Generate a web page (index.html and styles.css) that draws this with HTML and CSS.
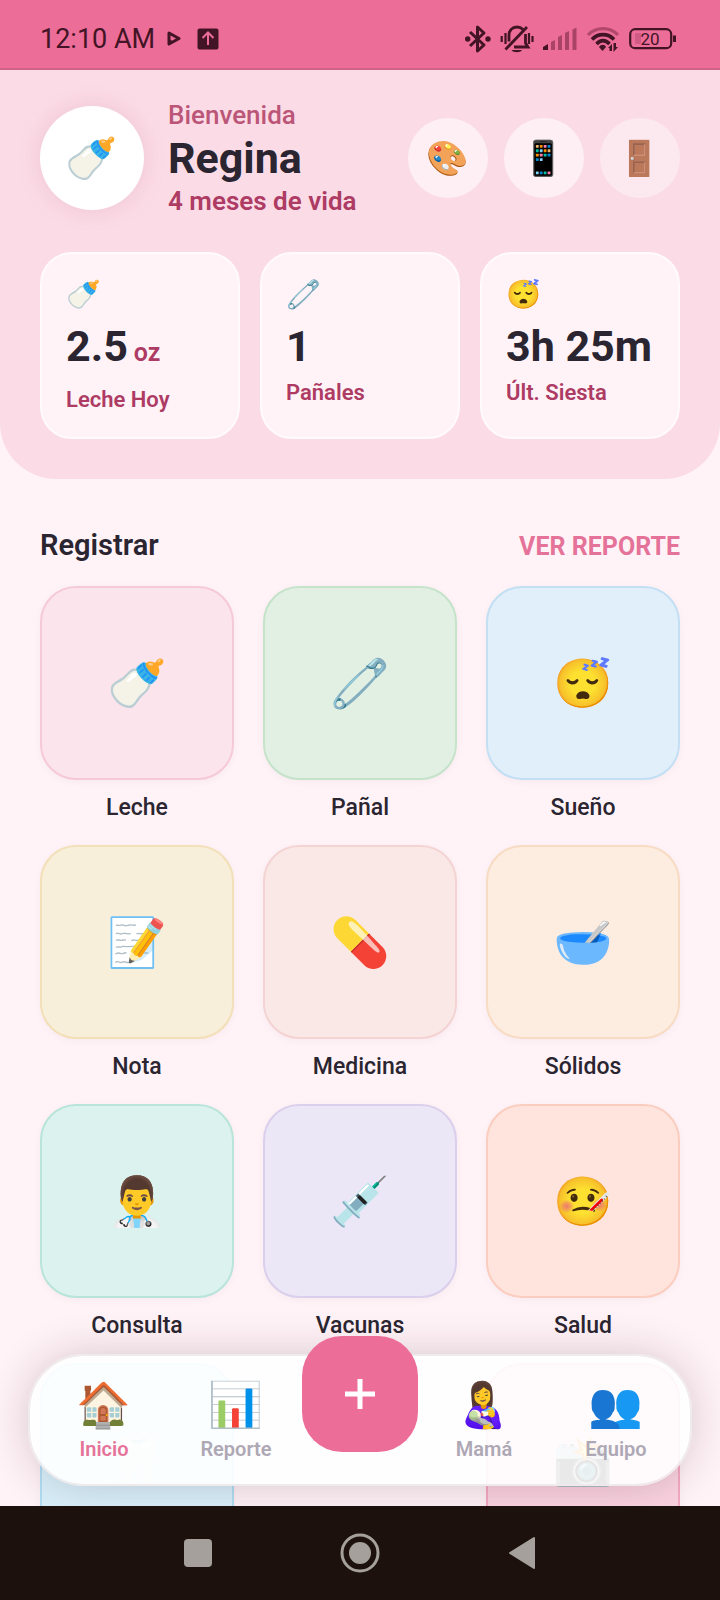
FILE: index.html
```html
<!DOCTYPE html>
<html lang="es">
<head>
<meta charset="utf-8">
<meta name="viewport" content="width=device-width, initial-scale=1">
<title>Inicio</title>
<link rel="stylesheet" href="styles.css">
</head>
<body>
<div class="app">
  <div class="status">
    <div class="status-left">
      <time>12:10 AM</time>
      <svg width="14" height="16" viewBox="0 0 14 16"><path d="M2 2 12 7.500 2 13Z" fill="none" stroke="#421425" stroke-width="3" stroke-linejoin="round"/><path d="M2 14V8l4 2.500Z" fill="#421425"/></svg>
      <svg class="upload" width="22" height="22" viewBox="0 0 22 22"><rect width="21" height="21" x=".5" y=".5" rx="2" fill="#421425"/><path d="M11 17V5M5.500 10 11 4.500l5.500 5.500" fill="none" stroke="#ec6d97" stroke-width="2"/></svg>
    </div>
    <div class="status-right">
      <svg width="26" height="30" viewBox="0 0 26 30"><path d="m5 8 14 13-6.500 6V3L19 9 5 22" fill="none" stroke="#421425" stroke-width="3" stroke-linejoin="round"/><circle cx="2.700" cy="15" r="2.700" fill="#421425"/><circle cx="23" cy="15" r="2.700" fill="#421425"/></svg>
      <svg width="34" height="30" viewBox="0 0 34 30"><g fill="none" stroke="#421425" stroke-width="2.800"><path d="M9 17.500v-6C9 6.500 12 3 17 3c2.500 0 4.500 1 6 2.500M25.500 10v9l2.500 4H14M5.500 25.500 27 3"/><path d="M1.700 12v6M5.500 9v11M29 9v11M32.500 12v6" stroke-width="2.200"/></g><path d="M11.500 26h10.500c-1.500 3-9 3-10.500 0Z" fill="#421425"/></svg>
      <svg width="34" height="24" viewBox="0 0 34 24"><path d="M0 23v-3l5-3v6Z" fill="#421425"/><path d="M8 23v-8l4-2v10ZM15 23V10l4-2v15ZM22 23V6l4-2v19ZM29.500 23V2.500l4-2V23Z" fill="#a94467"/></svg>
      <svg width="34" height="28" viewBox="0 0 34 28"><g fill="none" stroke-width="3.200"><path d="M2 10C10 1.500 24 1.500 32 10" stroke="#b3476c"/><path d="M6 14.500c6-6.500 16-6.500 22 0M10.500 19c4-4.500 9-4.500 13 0" stroke="#421425" stroke-width="3.600"/></g><path d="M13 22c2-3 6-3 7 0l-3.500 4ZM22 23l4-4v7h-2.500v-3M27.500 18H30v4h2l-4.500 5Z" fill="#421425"/></svg>
      <svg class="battery" width="48" height="24" viewBox="0 0 48 24"><rect x="6" y="6" width="6" height="11" rx="1" fill="#d05b84"/><rect x="1.200" y="2.200" width="41" height="19" rx="5" fill="none" stroke="#421425" stroke-width="2.200"/><path d="M44 8.500h3v6.500h-3Z" fill="#421425"/><text x="21" y="18" text-anchor="middle" class="battery-text">20</text></svg>
    </div>
  </div>

  <main class="content">
    <header class="hero">
      <div class="profile">
        <div class="avatar">🍼</div>
        <div class="who">
          <p class="hello">Bienvenida</p>
          <h1 class="name">Regina</h1>
          <p class="age">4 meses de vida</p>
        </div>
        <div class="tools">
          <button class="tool" aria-label="Tema">🎨</button>
          <button class="tool" aria-label="Dispositivo">📱</button>
          <button class="tool tool-faint" aria-label="Salir"><span>🚪</span></button>
        </div>
      </div>
      <div class="stats">
        <section class="stat"><span class="stat-icon">🍼</span><p class="stat-value"><span>2.5</span><small>oz</small></p><p class="stat-label stat-label-low">Leche Hoy</p></section>
        <section class="stat"><span class="stat-icon">🧷</span><p class="stat-value">1</p><p class="stat-label">Pañales</p></section>
        <section class="stat"><span class="stat-icon">😴</span><p class="stat-value">3h 25m</p><p class="stat-label">Últ. Siesta</p></section>
      </div>
    </header>

    <section class="log">
      <div class="log-head"><h2>Registrar</h2><a href="#reporte">VER REPORTE</a></div>
      <div class="grid">
        <button class="item"><span class="tile leche">🍼</span><span class="item-label">Leche</span></button>
        <button class="item"><span class="tile panal">🧷</span><span class="item-label">Pañal</span></button>
        <button class="item"><span class="tile sueno">😴</span><span class="item-label">Sueño</span></button>
        <button class="item"><span class="tile nota">📝</span><span class="item-label">Nota</span></button>
        <button class="item"><span class="tile medicina">💊</span><span class="item-label">Medicina</span></button>
        <button class="item"><span class="tile solidos">🥣</span><span class="item-label">Sólidos</span></button>
        <button class="item"><span class="tile consulta">👨‍⚕️</span><span class="item-label">Consulta</span></button>
        <button class="item"><span class="tile vacunas">💉</span><span class="item-label">Vacunas</span></button>
        <button class="item"><span class="tile salud">🤒</span><span class="item-label">Salud</span></button>
        <button class="item" aria-label="Dientes"><span class="tile dientes">🦷</span></button>
        <span></span>
        <button class="item" aria-label="Fotos"><span class="tile fotos">📸</span></button>
      </div>
    </section>

    <nav class="dock">
      <a class="tab tab-active" href="#inicio"><span class="tab-icon">🏠</span>Inicio</a>
      <a class="tab" href="#reporte"><span class="tab-icon">📊</span>Reporte</a>
      <button class="fab" aria-label="Agregar"><svg width="32" height="32" viewBox="0 0 32 32"><path d="M16 1v30M1 16h30" stroke="#fff" stroke-width="5"/></svg></button>
      <a class="tab" href="#mama"><span class="tab-icon">👩‍🍼</span>Mamá</a>
      <a class="tab" href="#equipo"><span class="tab-icon">👥</span>Equipo</a>
    </nav>
  </main>

  <div class="system">
    <button aria-label="Recientes"><svg width="40" height="40" viewBox="0 0 40 40"><rect x="6" y="6" width="28" height="28" rx="4" fill="#a5a09c"/></svg></button>
    <button aria-label="Inicio del sistema"><svg width="40" height="40" viewBox="0 0 40 40"><circle cx="20" cy="20" r="18" fill="none" stroke="#a5a09c" stroke-width="3"/><circle cx="20" cy="20" r="11" fill="#a5a09c"/></svg></button>
    <button aria-label="Atrás"><svg width="40" height="40" viewBox="0 0 40 40"><path d="M8 20 32 5v30Z" fill="#a5a09c" stroke="#a5a09c" stroke-width="2" stroke-linejoin="round"/></svg></button>
  </div>
</div>
</body>
</html>
```

FILE: styles.css
```css
* { box-sizing: border-box; }
body { margin: 0; background: #fff3f7; color: #2a2530; font-family: Roboto, "Noto Color Emoji", sans-serif; }
h1, h2, p { margin: 0; }
button { border: 0; padding: 0; background: none; color: inherit; font: inherit; }
a { text-decoration: none; }
svg { display: block; }

.app { height: 100vh; display: flex; flex-direction: column; }

.status { display: flex; justify-content: space-between; align-items: center; height: 70px; padding: 10px 43px 0 40px; background: #ec6d97; border-bottom: 2px solid #d0628a; color: #421425; }
.status-left, .status-right { display: flex; align-items: center; }
.status-left { gap: 12px; font-size: 27px; line-height: 32px; }
.upload { margin-left: 4px; }
.status-right { gap: 9px; }
.battery-text { font-size: 17px; fill: #421425; }

.content { flex: 1; min-height: 0; position: relative; overflow: hidden; }

.hero { padding: 28px 40px 40px; background: #fbdce6; border-radius: 0 0 56px 56px; }
.profile { display: flex; align-items: center; min-height: 120px; }
.avatar { display: grid; place-items: center; width: 104px; height: 104px; border-radius: 50%; background: #fff; box-shadow: 0 0 24px rgba(160, 50, 90, .14); font-size: 42px; }
.who { flex: 1; margin-left: 24px; }
.hello, .age { font-size: 26px; line-height: 32px; font-weight: 500; color: #bb5678; }
.age { color: #ad3b64; font-weight: 600; }
.name { font-size: 43px; line-height: 54px; font-weight: 700; }
.tools { display: flex; gap: 16px; }
.tool { display: grid; place-items: center; width: 80px; height: 80px; border-radius: 50%; background: #fdeff4; font-size: 34px; }
.tool-faint { background: #fce9f0; }
.tool-faint span { opacity: .85; }

.stats { display: grid; grid-template-columns: repeat(3, minmax(0, 1fr)); gap: 20px; margin-top: 34px; }
.stat { min-height: 187px; padding: 24px; border: 2px solid #fffafc; border-radius: 32px; background: #fff3f7; }
.stat-icon { display: block; font-size: 28px; line-height: 34px; }
.stat-value { display: flex; align-items: baseline; gap: 6px; margin-top: 8px; font-size: 43px; line-height: 52px; font-weight: 700; white-space: nowrap; }
.stat-value small { font-size: 25px; line-height: 26px; font-weight: 600; color: #ad3b64; }
.stat-label { margin-top: 8px; font-size: 22px; line-height: 26px; font-weight: 600; color: #ad3b64; }
.stat-label-low { margin-top: 15px; }

.log { padding: 48px 40px 0; }
.log-head { display: flex; justify-content: space-between; align-items: baseline; height: 36px; }
.log-head h2 { font-size: 29px; line-height: 36px; font-weight: 600; }
.log-head a { font-size: 25px; line-height: 30px; font-weight: 700; color: #e57399; }
.grid { display: grid; grid-template-columns: repeat(3, 1fr); gap: 23px 29px; margin-top: 23px; }
.item { display: flex; flex-direction: column; gap: 14px; text-align: center; }
.tile { display: grid; place-items: center; width: 100%; aspect-ratio: 1; border: 2px solid; border-radius: 36px; box-shadow: 0 2px 8px rgba(80, 20, 50, .04); font-size: 48px; }
.item-label { width: 100%; font-size: 23px; line-height: 28px; font-weight: 500; }
.leche { background: #fce4ec; border-color: #f6c9d8; }
.panal { background: #e2f0e3; border-color: #c5e3ca; }
.sueno { background: #e1effb; border-color: #c3dff3; }
.nota { background: #f8efda; border-color: #f3dfb8; }
.medicina { background: #fae8e6; border-color: #f4d3d3; }
.solidos { background: #fdece0; border-color: #f8dbc3; }
.consulta { background: #dcf2ee; border-color: #b9e4da; }
.vacunas { background: #ece7f6; border-color: #dacfec; }
.salud { background: #ffe4dd; border-color: #fbcdbf; }
.dientes { background: #d8f0fa; border-color: #b0def3; }
.fotos { background: #fad3e0; border-color: #f3a9c2; }

.dock { position: absolute; left: 28px; right: 28px; bottom: 20px; display: grid; grid-template-columns: 1fr 1fr 116px 1fr 1fr; height: 132px; padding: 0 8px; border: 2px solid #efeaec; border-radius: 56px; background: rgba(255, 255, 255, .9); background-clip: padding-box; box-shadow: 0 0 44px rgba(60, 20, 40, .2); }
.tab { display: flex; flex-direction: column; align-items: center; padding-top: 23px; gap: 6px; font-size: 20px; line-height: 24px; font-weight: 600; color: #aea8b5; }
.tab-active { color: #e57399; }
.tab-icon { font-size: 44px; line-height: 52px; }
.fab { display: grid; place-items: center; width: 116px; height: 116px; margin-top: -20px; border-radius: 40px; background: #ec6d97; }

.system { display: flex; justify-content: center; align-items: center; gap: 122px; height: 94px; background: #1c110c; }
```
